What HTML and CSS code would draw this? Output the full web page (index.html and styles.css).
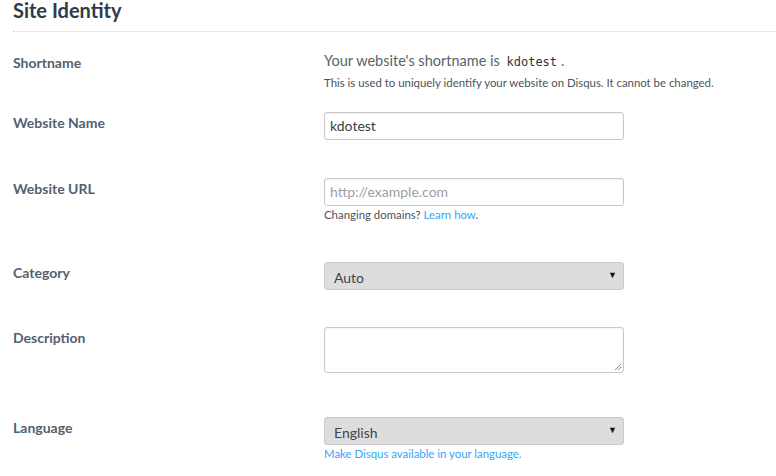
FILE: index.html
```html
<!DOCTYPE html>
<html>
<head>
<meta charset="utf-8">
<link rel="stylesheet" href="styles.css">
</head>
<body>
<div class="page">
  <h1 class="title">Site Identity</h1>
  <div class="row row-short">
    <div class="label">Shortname</div>
    <div class="field">
      <p class="lead">Your website's shortname is <code class="code">kdotest</code>.</p>
      <p class="help">This is used to uniquely identify your website on Disqus. It cannot be changed.</p>
    </div>
  </div>
  <div class="row row-name">
    <div class="label">Website Name</div>
    <div class="field">
      <div class="input">kdotest</div>
    </div>
  </div>
  <div class="row row-url">
    <div class="label">Website URL</div>
    <div class="field">
      <div class="input placeholder">http://example.com</div>
      <p class="help">Changing domains? <a class="link" href="#">Learn how</a>.</p>
    </div>
  </div>
  <div class="row row-cat">
    <div class="label">Category</div>
    <div class="field">
      <div class="select"><span>Auto</span><span class="arrow">▼</span></div>
    </div>
  </div>
  <div class="row row-desc">
    <div class="label">Description</div>
    <div class="field">
      <div class="textarea">
        <svg class="grip" width="9" height="9" viewBox="0 0 9 9"><path d="M8 2 L2 8 M8 5 L5 8" stroke="#888" stroke-width="1" fill="none"/></svg>
      </div>
    </div>
  </div>
  <div class="row row-lang">
    <div class="label">Language</div>
    <div class="field">
      <div class="select"><span>English</span><span class="arrow">▼</span></div>
      <p class="help"><a class="link" href="#">Make Disqus available in your language.</a></p>
    </div>
  </div>
</div>
</body>
</html>
```

FILE: styles.css
```css
html, body {
  margin: 0;
  padding: 0;
  background: #fff;
}
body {
  font-family: Lato, "Noto Sans", sans-serif;
  color: #3f4954;
}
.page {
  padding: 0 1px 0 13px;
}
.title {
  margin: 0;
  padding-top: 0;
  font-size: 20px;
  line-height: 21px;
  font-weight: 700;
  color: #2f3b47;
  border-bottom: 1px dotted #cfcfcf;
  box-sizing: border-box;
  height: 32px;
}
.row {
  display: flex;
}
.label {
  width: 311px;
  flex: none;
  padding-top: 1px;
  font-size: 14px;
  line-height: 20px;
  font-weight: 700;
  color: #536170;
}
.field {
  flex: 1;
}
.row-short { margin-top: 19px; margin-bottom: 21px; }
.row-name { margin-bottom: 38px; }
.row-url { margin-bottom: 39px; }
.row-cat { margin-bottom: 37px; }
.row-desc { margin-bottom: 44px; }
.row-short .label { padding-top: 2px; }

.lead {
  margin: 0;
  font-size: 14.5px;
  line-height: 20px;
  color: #59636d;
}
.code {
  font-family: "DejaVu Sans Mono", monospace;
  font-size: 12px;
  margin: 0 4px 0 3px;
  color: #333;
}
.help {
  margin: 3px 0 0;
  font-size: 11.4px;
  line-height: 16px;
  color: #4a535c;
  white-space: nowrap;
}
.row-url .help, .row-lang .help { margin-top: 1px; }
.link {
  color: #3aa3f5;
  text-decoration: none;
}
.input {
  box-sizing: border-box;
  width: 300px;
  height: 28px;
  border: 1px solid #c8c8c8;
  border-radius: 3px;
  box-shadow: inset 0 1px 2px rgba(0,0,0,0.06);
  padding: 0 5px;
  font-size: 14px;
  line-height: 26px;
  color: #3a3f45;
}
.placeholder {
  color: #9aa0a6;
}
.select {
  box-sizing: border-box;
  width: 300px;
  height: 28px;
  border: 1px solid #c9c9c9;
  border-radius: 3px;
  background: #dddddd;
  padding: 2px 6px 0 9px;
  font-size: 14px;
  line-height: 26px;
  color: #3f4349;
  display: flex;
  justify-content: space-between;
}
.arrow {
  font-size: 9px;
  color: #111;
  line-height: 20px;
}
.textarea {
  box-sizing: border-box;
  width: 300px;
  height: 46px;
  border: 1px solid #c8c8c8;
  border-radius: 3px;
  box-shadow: inset 0 1px 2px rgba(0,0,0,0.06);
  display: flex;
  justify-content: flex-end;
  align-items: flex-end;
}
.grip {
  display: block;
  margin: 0 1px 1px 0;
}
```
